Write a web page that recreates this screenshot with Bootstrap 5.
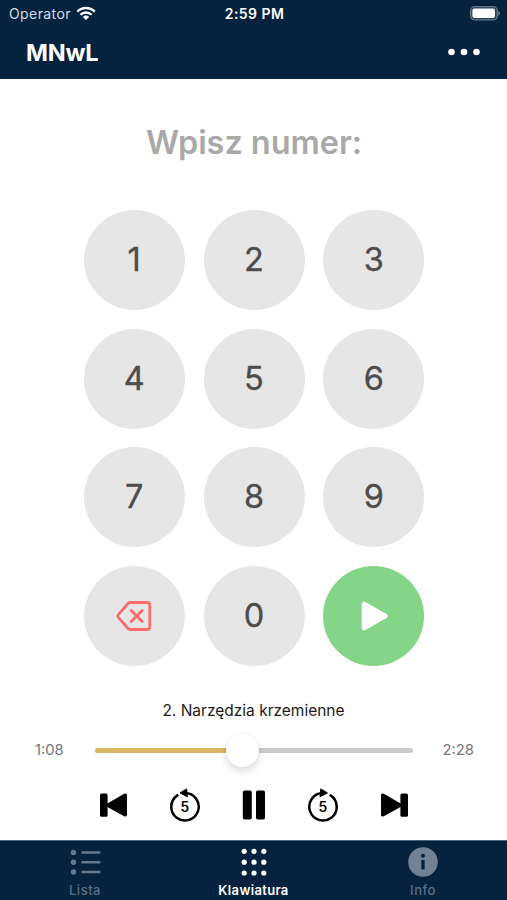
<!DOCTYPE html>
<html lang="pl">
<head>
<meta charset="utf-8">
<meta name="viewport" content="width=device-width, initial-scale=1">
<title>MNwL</title>
<link href="https://cdn.jsdelivr.net/npm/bootstrap@5.3.0/dist/css/bootstrap.min.css" rel="stylesheet">
<style>
  body { font-family: Inter, "Liberation Sans", sans-serif; height: 900px; overflow: hidden; line-height: 1; }
  svg { display: block; flex: none; }
  .bg-navy { background: #05233f; }
  .app-header { height: 79px; }
  .status-bar { height: 27px; padding: 0 7px 0 9px; }
  .status-side { flex: 1 1 0; }
  .carrier { font-size: 14px; color: #d5dce4; letter-spacing: .4px; padding-top: 1px; }
  .clock { font-size: 14px; letter-spacing: .45px; padding-top: 1px; }
  .wifi-icon { margin-left: 5px; }
  .title-bar { height: 52px; padding: 0 27px 2px 26px; }
  .app-title { font-size: 23.5px; letter-spacing: -.2px; padding-top: 3px; }
  .prompt { height: 131px; padding: 0 0 3px 1px; font-size: 32.5px; letter-spacing: -.05px; color: #a9a9a9; }
  .keypad { display: grid; grid-template-columns: repeat(3, 101px); grid-auto-rows: 100px; gap: 18.5px 18.8px; justify-content: center; padding-left: 1px; }
  .pad-key { border-radius: 50%; border: 0; background: #e6e6e6; color: #4d4d4d; font-size: 32.5px; font-weight: 400; -webkit-text-stroke: .35px #4d4d4d; padding: 1px 0 0; }
  .pad-go { background: #85d588; }
  .track-name { font-size: 15.5px; color: #1b1b1b; height: 20px; margin-top: 35px; }
  .seek-row { height: 58px; padding: 2px 33px 0 35px; }
  .time-label { font-size: 14.8px; color: #777; width: 60px; }
  .seek-track { height: 5px; width: 318px; margin-left: -1px; border-radius: 3px; background: #cbcbcb; }
  .seek-fill { height: 5px; border-radius: 3px; background: #dbb562; }
  .seek-knob { width: 33px; height: 33px; margin-left: -16.5px; flex: none; border-radius: 50%; background: #fff; box-shadow: 0 4px 9px rgba(0,0,0,.15), 0 0 2px rgba(0,0,0,.06); }
  .transport { height: 51px; padding: 1px 98px 0 99px; }
  .tab-bar { height: 60px; border-top: 1px solid #4c6277; }
  .tab-item { width: 169px; color: #5a6f84; font-size: 13px; font-weight: 500; letter-spacing: .5px; padding: 5px 0 0 1px; }
  .tab-item.current { color: #fff; font-weight: 600; letter-spacing: .35px; padding-left: 0; }
  .tab-item svg { margin-bottom: 6px; }
</style>
</head>
<body class="bg-white d-flex flex-column">
<header class="app-header bg-navy text-white">
  <div class="status-bar d-flex align-items-center">
    <div class="status-side d-flex align-items-center">
      <span class="carrier">Operator</span>
      <svg class="wifi-icon" width="20" height="15" viewBox="0 0 20 15" fill="none" stroke="#fff" stroke-width="2.3"><path d="M1.3 5.6a12.3 12.3 0 0 1 17.4 0M4.4 8.8a8 8 0 0 1 11.2 0"/><path d="M10 14 6.8 10.9a4.6 4.6 0 0 1 6.4 0z" fill="#fff" stroke="none"/></svg>
    </div>
    <span class="clock fw-semibold">2:59 PM</span>
    <div class="status-side d-flex justify-content-end">
      <svg width="30" height="15" viewBox="0 0 30 15"><rect x=".7" y=".7" width="26.6" height="13.2" rx="4" fill="#23405a" stroke="#64788c" stroke-width="1.3"/><rect x="2.4" y="2.4" width="22.6" height="9.6" rx="2" fill="#fff"/><path d="M28.3 5v5q1.7-.8 1.7-2.5T28.3 5" fill="#64788c"/></svg>
    </div>
  </div>
  <div class="title-bar d-flex align-items-center justify-content-between">
    <h1 class="app-title fw-bold m-0">MNwL</h1>
    <svg width="32" height="8" viewBox="0 0 32 8" fill="#fff"><circle cx="3.5" cy="4" r="3.3"/><circle cx="16" cy="4" r="3.3"/><circle cx="28.5" cy="4" r="3.3"/></svg>
  </div>
</header>

<main class="flex-grow-1">
  <div class="prompt fw-semibold d-flex align-items-center justify-content-center">Wpisz numer:</div>
  <div class="keypad">
    <button class="pad-key">1</button><button class="pad-key">2</button><button class="pad-key">3</button>
    <button class="pad-key">4</button><button class="pad-key">5</button><button class="pad-key">6</button>
    <button class="pad-key">7</button><button class="pad-key">8</button><button class="pad-key">9</button>
    <button class="pad-key d-flex align-items-center justify-content-center" aria-label="Usuń">
      <svg width="36" height="30" viewBox="0 0 36 30" fill="none" stroke="#fb6b6b" stroke-width="2.8" stroke-linecap="round" stroke-linejoin="round"><path d="M14.2 1.5H31q2.8 0 2.8 2.8v21.4q0 2.8-2.8 2.8H14.2q-1.3 0-2.2-.9L2.4 16.4q-1.1-1.4 0-2.8L12 2.4q.9-.9 2.2-.9zM15.2 9.4l11 11.2m0-11.2-11 11.2"/></svg>
    </button>
    <button class="pad-key">0</button>
    <button class="pad-key pad-go d-flex align-items-center justify-content-center" aria-label="Odtwórz">
      <svg width="28" height="30" viewBox="0 0 28 30" fill="#fff" stroke="#fff" stroke-width="5" stroke-linejoin="round"><path d="M4.2 3.2v23.6L25 15z"/></svg>
    </button>
  </div>

  <div class="track-name d-flex align-items-center justify-content-center">2. Narzędzia krzemienne</div>
  <div class="seek-row d-flex align-items-center justify-content-between">
    <span class="time-label">1:08</span>
    <div class="seek-track d-flex align-items-center">
      <div class="seek-fill" style="width:46.4%"></div>
      <div class="seek-knob"></div>
    </div>
    <span class="time-label text-end">2:28</span>
  </div>
  <div class="transport d-flex align-items-center justify-content-between">
    <svg width="29" height="24" viewBox="0 0 29 24"><rect x="1" y=".5" width="7.6" height="23.3" rx="1.6"/><path d="M7.5 10.9 25.2.8q2.8-1.2 2.8 1.8v18.8q0 3-2.8 1.8L7.5 13.4z"/></svg>
    <svg width="32" height="34" viewBox="0 0 32 34"><path d="M8.4 7.4A13.7 13.7 0 1 0 16 5.1h2" fill="none" stroke="#000" stroke-width="2.5" stroke-linecap="round"/><path d="M11 4.9 17.6.9 18.4 8.8z" stroke="#000" stroke-linejoin="round"/><text x="15.8" y="23.6" text-anchor="middle" font-size="14" font-weight="500" stroke="#000" stroke-width=".2">5</text></svg>
    <svg width="24" height="30" viewBox="0 0 24 30"><rect x=".8" y=".5" width="9" height="29" rx="1.8"/><rect x="14" y=".5" width="9" height="29" rx="1.8"/></svg>
    <svg width="32" height="34" viewBox="0 0 32 34"><path d="M23.6 7.4A13.7 13.7 0 1 1 16 5.1h-2" fill="none" stroke="#000" stroke-width="2.5" stroke-linecap="round"/><path d="M20.4 4.9 13.8.9 13 8.8z" stroke="#000" stroke-linejoin="round"/><text x="15.8" y="23.6" text-anchor="middle" font-size="14" font-weight="500" stroke="#000" stroke-width=".2">5</text></svg>
    <svg width="29" height="24" viewBox="0 0 29 24"><rect x="20.4" y=".5" width="7.6" height="23.3" rx="1.6"/><path d="M21.5 10.9 3.8.8Q1-.4 1 2.6v18.8q0 3 2.8 1.8l17.7-9.8z"/></svg>
  </div>
</main>

<nav class="tab-bar bg-navy d-flex justify-content-between">
  <div class="tab-item d-flex flex-column align-items-center">
    <svg width="31" height="32" viewBox="0 0 31 32" fill="#66798c"><circle cx="3.5" cy="6.5" r="2.7"/><circle cx="3.5" cy="16.2" r="2.7"/><circle cx="3.5" cy="26" r="2.7"/><path d="M12.5 6.5h16.8m-16.8 9.7h16.8M12.5 26h16.8" stroke="#66798c" stroke-width="2.6" stroke-linecap="round"/></svg>
    <span>Lista</span>
  </div>
  <div class="tab-item current d-flex flex-column align-items-center">
    <svg width="28" height="32" viewBox="0 0 28 32" fill="#fff"><circle cx="4.2" cy="5.3" r="2.6"/><circle cx="14" cy="5.3" r="2.6"/><circle cx="23.8" cy="5.3" r="2.6"/><circle cx="4.2" cy="16.2" r="2.6"/><circle cx="14" cy="16.2" r="2.6"/><circle cx="23.8" cy="16.2" r="2.6"/><circle cx="4.2" cy="27" r="2.6"/><circle cx="14" cy="27" r="2.6"/><circle cx="23.8" cy="27" r="2.6"/></svg>
    <span>Klawiatura</span>
  </div>
  <div class="tab-item d-flex flex-column align-items-center">
    <svg width="30" height="32" viewBox="0 0 30 32"><circle cx="15" cy="16" r="14.8" fill="#708294"/><circle cx="15" cy="9.8" r="2" fill="#05233f"/><path d="M13.3 14h3.3v9.4h-3.3z" fill="#05233f"/></svg>
    <span>Info</span>
  </div>
</nav>
<script src="https://cdn.jsdelivr.net/npm/bootstrap@5.3.0/dist/js/bootstrap.bundle.min.js"></script>
</body>
</html>
